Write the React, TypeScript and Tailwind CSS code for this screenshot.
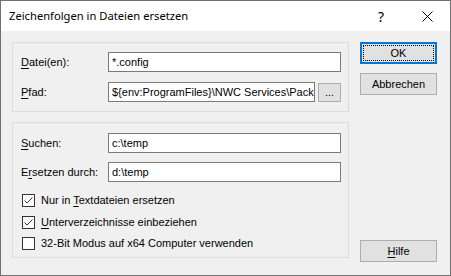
import React from 'react';

const ui = { fontFamily: '"Liberation Sans", Arial, sans-serif' };

// underline the access key letter
const Key = ({ children }: { children: string }) => (
  <span className="underline underline-offset-2 decoration-1">{children}</span>
);

const Field = ({ label, value, inputW = 'w-[233px]', children }: { label: React.ReactNode; value: string; inputW?: string; children?: React.ReactNode }) => (
  <div className="flex items-center h-[20px]">
    <div className="w-[87px] text-[11px] text-black">{label}</div>
    <div className={`${inputW} h-[20px] border border-[#7a7a7a] bg-white pl-[3px] text-[11px] leading-[18px] text-black whitespace-nowrap overflow-hidden`}>
      {value}
    </div>
    {children}
  </div>
);

const Check = ({ checked, label }: { checked: boolean; label: React.ReactNode }) => (
  <div className="flex items-center h-[13px] gap-[6px]">
    <div className="w-[13px] h-[13px] border border-[#333333] bg-white flex items-center justify-center">
      {checked && (
        <svg width="11" height="11" viewBox="0 0 11 11">
          <polyline points="1.5,5.5 4,8 9.5,2.5" fill="none" stroke="#333" strokeWidth="1" />
        </svg>
      )}
    </div>
    <span className="text-[11px] text-black">{label}</span>
  </div>
);

const Button = ({ children, focused }: { children: React.ReactNode; focused?: boolean }) => (
  <div
    className={
      focused
        ? 'w-[77px] h-[22px] border-2 border-[#0078d7] bg-[#e1e1e1] p-[1px]'
        : 'w-[77px] h-[22px] border border-[#adadad] bg-[#e1e1e1]'
    }
  >
    <div
      className={
        focused
          ? 'w-full h-full border border-dotted border-black flex items-center justify-center text-[11px] text-black'
          : 'w-full h-full flex items-center justify-center text-[11px] text-black'
      }
    >
      {children}
    </div>
  </div>
);

export default function App() {
  return (
    <div className="w-[451px] h-[276px] border border-[#707070] bg-[#f0f0f0] flex flex-col" style={ui}>
      <div className="h-[30px] bg-white flex items-center pl-[8px] shrink-0">
        <span className="text-[11.2px] text-black flex-1" style={{ fontFamily: '"Noto Sans", sans-serif' }}>
          Zeichenfolgen in Dateien ersetzen
        </span>
        <span className="text-[14px] text-black w-[46px] text-center" style={{ fontFamily: '"Noto Sans", sans-serif' }}>?</span>
        <div className="w-[46px] flex items-center justify-center">
          <svg width="11" height="11" viewBox="0 0 11 11">
            <path d="M0.5 0.5 L10.5 10.5 M10.5 0.5 L0.5 10.5" stroke="#000" strokeWidth="1" />
          </svg>
        </div>
      </div>
      <div className="flex pt-[11px] pl-[11px] gap-[11px]">
        <div className="flex flex-col gap-[10px] w-[337px]">
          <div className="border border-[#dcdcdc] pt-[9px] pb-[9px] pl-[8px] flex flex-col gap-[10px]">
            <Field label={<><Key>D</Key>atei(en):</>} value="*.config" />
            <Field label={<><Key>P</Key>fad:</>} value="${env:ProgramFiles}\NWC Services\Pack" inputW="w-[207px]">
              <div className="ml-[3px] w-[23px] h-[19px] border border-[#adadad] bg-[#e1e1e1] flex items-end justify-center pb-[3px] text-[11px] leading-none text-black">
                ...
              </div>
            </Field>
          </div>
          <div className="border border-[#dcdcdc] h-[136px] pt-[10px] pl-[8px] flex flex-col">
            <div className="flex flex-col gap-[9px]">
              <Field label={<><Key>S</Key>uchen:</>} value="c:\temp" />
              <Field label={<>E<Key>r</Key>setzen durch:</>} value="d:\temp" />
            </div>
            <div className="flex flex-col gap-[8.5px] mt-[12px] pl-[1px]">
              <Check checked label={<>Nur in <Key>T</Key>extdateien ersetzen</>} />
              <Check checked label={<><Key>U</Key>nterverzeichnisse einbeziehen</>} />
              <Check checked={false} label="32-Bit Modus auf x64 Computer verwenden" />
            </div>
          </div>
        </div>
        <div className="flex flex-col">
          <Button focused>OK</Button>
          <div className="mt-[9px]">
            <Button>Abbrechen</Button>
          </div>
          <div className="mt-[145px]">
            <Button><><Key>H</Key>ilfe</></Button>
          </div>
        </div>
      </div>
    </div>
  );
}
